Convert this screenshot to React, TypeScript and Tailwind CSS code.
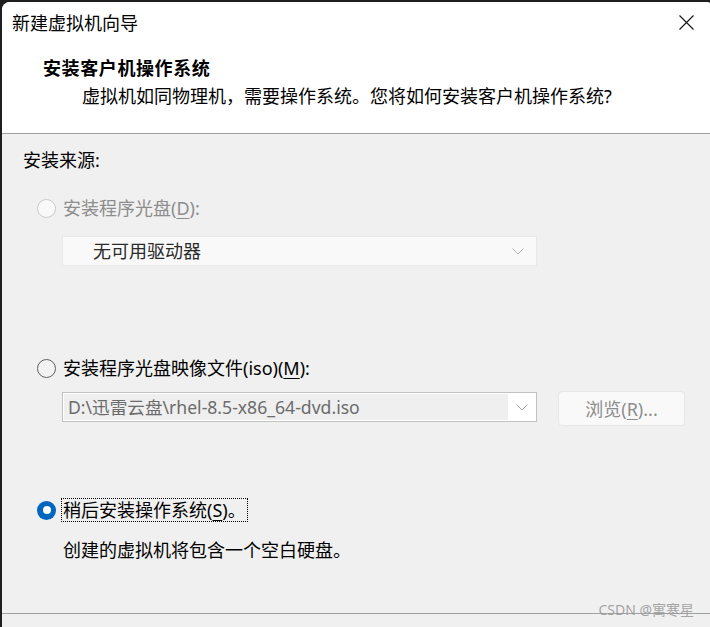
import React from "react";

function Radio({ state }: { state: "disabled" | "off" | "on" }) {
  if (state === "on") {
    return (
      <span className="w-[19px] h-[19px] rounded-full bg-[#0067c0] flex items-center justify-center shrink-0">
        <span className="w-[8px] h-[8px] rounded-full bg-white" />
      </span>
    );
  }
  if (state === "disabled") {
    return <span className="w-[19px] h-[19px] rounded-full border border-[#c9c9c9] bg-[#f9f9f9] shrink-0" />;
  }
  return <span className="w-[19px] h-[19px] rounded-full border border-[#5f5f5f] bg-[#f3f3f3] shrink-0" />;
}

function Chevron({ color }: { color: string }) {
  return (
    <svg width="12" height="7" viewBox="0 0 12 7" fill="none">
      <path d="M0.5 0.5 L6 6 L11.5 0.5" stroke={color} strokeWidth="1" />
    </svg>
  );
}

export default function App() {
  return (
    <div className="w-[710px] h-[627px] bg-[#1f1f1f] pt-[2px] pl-[2px] overflow-hidden relative font-[family-name:'Noto_Sans','Noto_Sans_CJK_SC',sans-serif] text-black">
      <div className="w-[712px] h-[625px] bg-white rounded-t-[8px] flex flex-col overflow-hidden">
        {/* header */}
        <div className="h-[131px] bg-white flex flex-col shrink-0">
          <div className="h-[40px] flex items-center justify-between pl-[10px] pr-[20px]">
            <span className="text-[18px] leading-[24px] font-['Noto_Sans_CJK_SC',sans-serif]">新建虚拟机向导</span>
            <svg width="15" height="15" viewBox="0 0 15 15" fill="none">
              <path d="M0.5 0.5 L14.5 14.5 M14.5 0.5 L0.5 14.5" stroke="#1a1a1a" strokeWidth="1.2" />
            </svg>
          </div>
          <div className="h-[14px]" />
          <div className="h-[24px] flex items-center pl-[41px]">
            <span className="text-[18px] leading-[24px] font-bold tracking-[0.6px]">安装客户机操作系统</span>
          </div>
          <div className="h-[4px]" />
          <div className="h-[24px] flex items-center pl-[80px]">
            <span className="text-[18px] leading-[24px]">虚拟机如同物理机，需要操作系统。您将如何安装客户机操作系统?</span>
          </div>
        </div>
        <div className="h-px bg-[#a0a0a0] shrink-0" />
        {/* body */}
        <div className="flex-1 bg-[#f0f0f0] flex flex-col">
          <div className="h-[52px] flex items-center pl-[21px] shrink-0">
            <span className="text-[18px] leading-[24px]">安装来源:</span>
          </div>
          <div className="h-[44px] flex items-center pl-[35px] gap-[7px] shrink-0">
            <Radio state="disabled" />
            <span className="text-[18px] leading-[24px] text-[#8d8d8d]">
              安装程序光盘(<span className="underline underline-offset-[3px]">D</span>):
            </span>
          </div>
          <div className="mt-[6px] ml-[60px] w-[475px] h-[30px] bg-[#f9f9f9] border border-[#e8e8e8] flex items-center justify-between pl-[30px] pr-[12px] shrink-0">
            <span className="text-[18px] leading-[24px] text-[#2a2a2a]">无可用驱动器</span>
            <Chevron color="#b4b4b4" />
          </div>
          <div className="mt-[82px] h-[40px] flex items-center pl-[35px] gap-[7px] shrink-0">
            <Radio state="off" />
            <span className="text-[18px] leading-[24px]">
              安装程序光盘映像文件(iso)(<span className="underline underline-offset-[3px]">M</span>):
            </span>
          </div>
          <div className="mt-[3px] ml-[60px] flex items-start gap-[21px] shrink-0">
            <div className="mt-px w-[475px] h-[30px] border border-[#c2c2c2] bg-white flex items-stretch">
              <div className="flex-1 m-px mr-0 bg-[#efefef] flex items-center pl-[4px] overflow-hidden">
                <span className="text-[17.6px] leading-[24px] text-[#6b6b6b] whitespace-nowrap">D:\迅雷云盘\rhel-8.5-x86_64-dvd.iso</span>
              </div>
              <div className="w-[28px] flex items-center justify-center">
                <Chevron color="#a8a8a8" />
              </div>
            </div>
            <div className="w-[127px] h-[35px] bg-[#f9f9f9] border border-[#e6e6e6] rounded-[4px] flex items-center justify-center">
              <span className="text-[18px] leading-[24px] text-[#8d8d8d]">
                浏览(<span className="underline underline-offset-[3px]">R</span>)...
              </span>
            </div>
          </div>
          <div className="mt-[64px] h-[40px] flex items-center pl-[35px] gap-[5px] shrink-0">
            <Radio state="on" />
            <span className="text-[18px] leading-[22px] border border-dotted border-black px-px">
              稍后安装操作系统(<span className="underline underline-offset-[3px]">S</span>)。
            </span>
          </div>
          <div className="h-[40px] flex items-center pl-[61px] shrink-0">
            <span className="text-[18px] leading-[24px]">创建的虚拟机将包含一个空白硬盘。</span>
          </div>
          <div className="flex-1" />
          <div className="h-px bg-[#a0a0a0] shrink-0" />
          <div className="h-[13px] shrink-0" />
        </div>
      </div>
      <span className="absolute right-[16px] bottom-[8px] text-[14px] leading-[18px] text-[#9a9a9a]/90">CSDN @寓寒星</span>
    </div>
  );
}
